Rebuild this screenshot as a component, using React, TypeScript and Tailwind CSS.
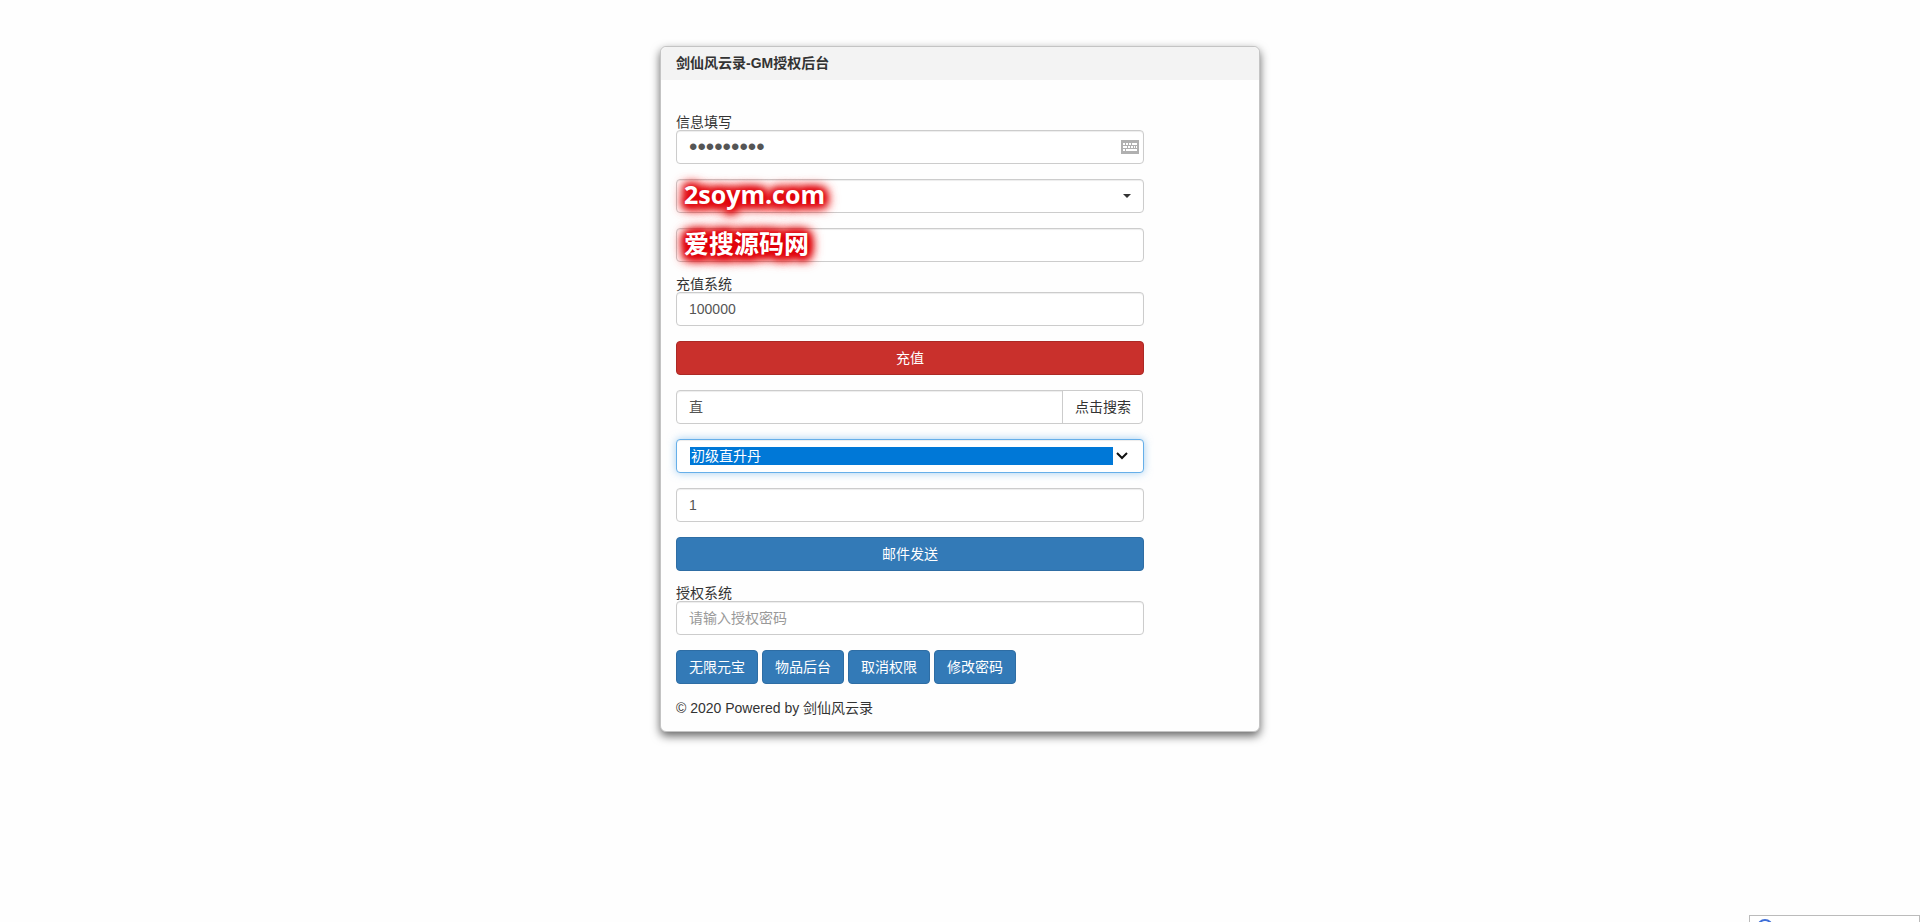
import { useState } from "react";
import type { InputHTMLAttributes, ReactNode } from "react";

const FIELD =
  "block h-[34px] w-full rounded border border-[#ccc] bg-white px-3 text-[#555] shadow-[inset_0_1px_1px_rgba(0,0,0,0.075)] outline-none placeholder:text-[#999]";

const PRIMARY =
  "h-[34px] rounded border border-[#2e6da4] bg-[#337ab7] px-3 text-sm text-white hover:bg-[#286090]";

function Field({ className = "text-sm", ...props }: InputHTMLAttributes<HTMLInputElement>) {
  return <input {...props} className={`${FIELD} ${className}`} />;
}

function Section({ label, htmlFor, children }: { label: string; htmlFor: string; children: ReactNode }) {
  return (
    <div>
      <label htmlFor={htmlFor} className="block text-sm leading-[15px]">
        {label}
      </label>
      {children}
    </div>
  );
}

function Stamp({ children }: { children: ReactNode }) {
  return (
    <span className="pointer-events-none absolute inset-y-0 left-2 flex items-center pb-[3px] text-[25px] leading-none font-bold whitespace-nowrap text-white font-['Open_Sans','Noto_Sans_CJK_SC',sans-serif] [text-shadow:0_1px_6px_#e0000a,0_1px_8px_#e0000a,0_1px_10px_#e0000a,0_1px_12px_#e0000a,0_1px_12px_#e0000a,0_1px_14px_#e0000a,0_1px_14px_#e0000a,0_1px_16px_#e0000a]">
      {children}
    </span>
  );
}

function KeyboardIcon() {
  return (
    <svg width="18" height="14" viewBox="0 0 18 14" aria-hidden="true">
      <rect width="18" height="14" fill="#b0b0b0" />
      <path
        d="M2 3h2v2H2zM5 3h2v2H5zM8 3h2v2H8zM11 3h5v2h-5zM2 6h4v2H2zM7 6h2v2H7zM10 6h2v2h-2zM13 6h1v2h-1zM15 6h1v2h-1zM2 9h2v2H2zM5 9h11v2H5z"
        fill="#fff"
      />
    </svg>
  );
}

export default function App() {
  const [password, setPassword] = useState("gm1234567");
  const [amount, setAmount] = useState("100000");
  const [query, setQuery] = useState("直");
  const [count, setCount] = useState("1");

  return (
    <div className="flex min-h-screen flex-col items-center bg-[#fefefe] px-4 pt-[46px] text-sm text-[#333] font-['Liberation_Sans','Noto_Sans_CJK_SC',sans-serif]">
      <main className="w-full max-w-[600px] rounded-md border border-[#c4c4c4] bg-[#fefefe] shadow-[0_4px_10px_rgba(0,0,0,0.6)]">
        <h1 className="rounded-t-md bg-[#f3f3f3] px-[15px] text-sm leading-[33px] font-bold">
          剑仙风云录-GM授权后台
        </h1>
        <form className="px-[15px] pt-[35px] pb-[14px]" onSubmit={(e) => e.preventDefault()}>
          <div className="flex max-w-[468px] flex-col gap-[15px]">
            <Section label="信息填写" htmlFor="gm-password">
              <div className="relative">
                <Field
                  id="gm-password"
                  type="password"
                  className="text-2xl"
                  value={password}
                  onChange={(e) => setPassword(e.target.value)}
                />
                <span className="pointer-events-none absolute inset-y-0 right-[5px] flex items-center">
                  <KeyboardIcon />
                </span>
              </div>
            </Section>

            <div className="relative">
              <select aria-label="选择区服" className={`${FIELD} appearance-none text-sm`}>
                <option></option>
              </select>
              <svg className="pointer-events-none absolute top-[15px] right-[13px]" width="8" height="4" aria-hidden="true">
                <path d="M0 0h8L4 4z" fill="#333" />
              </svg>
              <Stamp>2soym.com</Stamp>
            </div>

            <div className="relative">
              <Field aria-label="角色" type="text" />
              <Stamp>爱搜源码网</Stamp>
            </div>

            <Section label="充值系统" htmlFor="amount">
              <Field id="amount" type="text" value={amount} onChange={(e) => setAmount(e.target.value)} />
            </Section>

            <button type="button" className="h-[34px] w-full rounded border border-[#ac2925] bg-[#c9302c] text-sm text-white">
              充值
            </button>

            <div className="mr-px flex h-[34px] rounded border border-[#ccc] bg-white">
              <input
                aria-label="搜索物品"
                type="text"
                value={query}
                onChange={(e) => setQuery(e.target.value)}
                className="min-w-0 flex-1 rounded-l px-3 text-[#555] shadow-[inset_0_1px_1px_rgba(0,0,0,0.075)] outline-none"
              />
              <button type="button" className="border-l border-[#ccc] pr-[11px] pl-3">
                点击搜索
              </button>
            </div>

            <div className="relative flex h-[34px] items-center rounded border border-[#66afe9] bg-white pr-[30px] pl-[13px] shadow-[inset_0_1px_1px_rgba(0,0,0,0.075),0_0_8px_rgba(102,175,233,0.6)]">
              <select
                aria-label="物品"
                className="h-[18px] w-full appearance-none bg-[#0078d7] px-px text-sm leading-[18px] text-white outline-none"
              >
                <option>初级直升丹</option>
              </select>
              <svg className="pointer-events-none absolute top-3 right-[15px]" width="12" height="8" aria-hidden="true">
                <path d="M1 1l5 5 5-5" fill="none" stroke="#111" strokeWidth="2" />
              </svg>
            </div>

            <Field aria-label="数量" type="text" value={count} onChange={(e) => setCount(e.target.value)} />

            <button type="button" className={PRIMARY}>
              邮件发送
            </button>

            <Section label="授权系统" htmlFor="auth-password">
              <Field id="auth-password" type="text" placeholder="请输入授权密码" />
            </Section>

            <div className="flex flex-wrap gap-1">
              <button type="button" className={PRIMARY}>无限元宝</button>
              <button type="button" className={PRIMARY}>物品后台</button>
              <button type="button" className={PRIMARY}>取消权限</button>
              <button type="button" className={PRIMARY}>修改密码</button>
            </div>

            <footer className="leading-[18px]">© 2020 Powered by 剑仙风云录</footer>
          </div>
        </form>
      </main>

      <div className="fixed right-0 bottom-0 h-[7px] w-[171px] overflow-hidden border border-b-0 border-[#bbb] bg-white" aria-hidden="true">
        <svg className="ml-[6px]" width="18" height="18" viewBox="0 0 18 18">
          <circle cx="9" cy="11" r="7" fill="none" stroke="#3f6fd8" strokeWidth="2" />
        </svg>
      </div>
    </div>
  );
}
